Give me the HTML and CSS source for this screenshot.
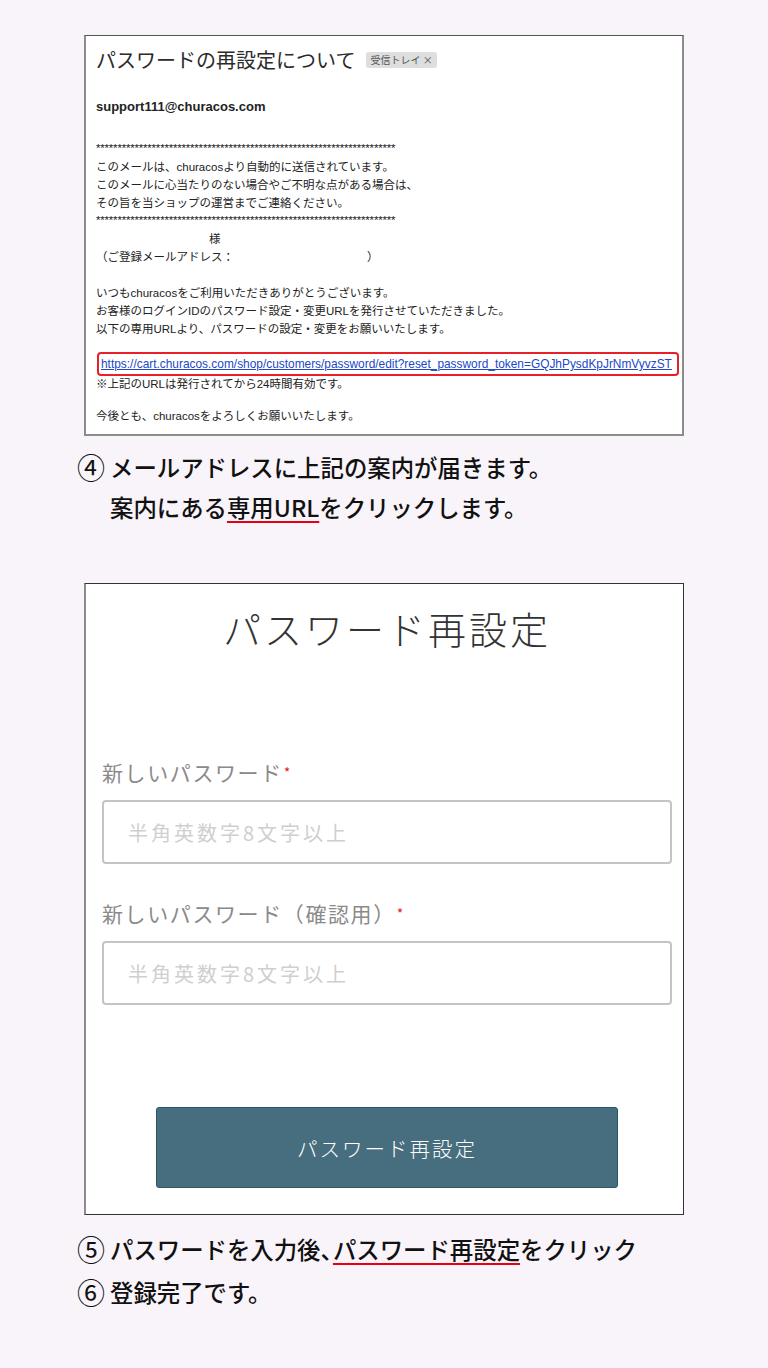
FILE: index.html
```html
<!DOCTYPE html>
<html lang="ja">
<head>
    <meta charset="UTF-8">
    <title>パスワード再設定の手順</title>
    <link rel="stylesheet" href="styles.css">
</head>
<body>
<div class="page">

<!-- メール画面 -->
<div class="mail">
    <div class="mail-title">パスワードの再設定について<span class="badge">受信トレイ ×</span></div>
    <div class="mail-from">support111@churacos.com</div>
    <div class="mail-body">
        <div class="stars">**********************************************************************</div>
        <div>このメールは、churacosより自動的に送信されています。</div>
        <div>このメールに心当たりのない場合やご不明な点がある場合は、</div>
        <div>その旨を当ショップの運営までご連絡ください。</div>
        <div class="stars">**********************************************************************</div>
        <div class="sama">様</div>
        <div>（ご登録メールアドレス：<span class="blank"></span>）</div>
        <div class="gap"></div>
        <div>いつもchuracosをご利用いただきありがとうございます。</div>
        <div>お客様のログインIDのパスワード設定・変更URLを発行させていただきました。</div>
        <div>以下の専用URLより、パスワードの設定・変更をお願いいたします。</div>
        <div class="link-box"><a href="#">https://cart.churacos.com/shop/customers/password/edit?reset_password_token=GQJhPysdKpJrNmVyvzST</a></div>
        <div class="note">※上記のURLは発行されてから24時間有効です。</div>
        <div class="last">今後とも、churacosをよろしくお願いいたします。</div>
    </div>
</div>

<div class="caption cap1">
    <div><span class="num">④</span>メールアドレスに上記の案内が届きます。</div>
    <div class="indent">案内にある<span class="mark">専用URL</span>をクリックします。</div>
</div>

<!-- 再設定フォーム -->
<div class="reset">
    <h2>パスワード再設定</h2>
    <form>
        <label class="lbl first">新しいパスワード<span class="req">*</span></label>
        <input type="password" placeholder="半角英数字8文字以上">
        <label class="lbl">新しいパスワード（確認用）<span class="req">*</span></label>
        <input type="password" placeholder="半角英数字8文字以上">
        <div class="btn-wrap">
            <button type="button">パスワード再設定</button>
        </div>
    </form>
</div>

<div class="caption cap2">
    <div><span class="num">⑤</span>パスワードを入力後<span class="comma">、</span><span class="mark">パスワード再設定</span>をクリック</div>
    <div><span class="num">⑥</span>登録完了です。</div>
</div>

</div>
</body>
</html>
```

FILE: styles.css
```css
body {
    margin: 0;
    background-color: #f9f4fa;
    font-family: "Liberation Sans", "Noto Sans CJK JP", sans-serif;
    color: #222;
}

.page {
    padding-top: 35px;
    padding-bottom: 40px;
}

/* メール画面 */
.mail {
    width: 600px;
    height: 401px;
    box-sizing: border-box;
    margin: 0 auto;
    background-color: #fff;
    border: 2px solid #8c8c8c;
    border-top: 1px solid #555;
    padding: 12px 0 0 10px;
}

.mail-title {
    font-family: "Noto Sans CJK JP", sans-serif;
    font-size: 20px;
    line-height: 24px;
    color: #2b2b2b;
    display: flex;
    align-items: center;
}

.badge {
    font-size: 10px;
    line-height: 16px;
    color: #555;
    background-color: #dedede;
    border-radius: 3px;
    padding: 0 4px;
    margin-left: 11px;
}

.mail-from {
    margin-top: 26px;
    font-size: 13px;
    font-weight: bold;
    line-height: 18px;
}

.mail-body {
    margin-top: 24px;
    font-size: 11.5px;
    line-height: 18px;
}

.stars {
    letter-spacing: -0.2px;
    line-height: 16px;
    height: 18px;
}

.sama {
    padding-left: 113px;
}

.blank {
    display: inline-block;
    width: 133px;
}

.gap {
    height: 18px;
}

.link-box {
    margin: 14px 3px 0 1px;
    border: 2px solid #e8202a;
    border-radius: 4px;
    height: 24px;
    box-sizing: border-box;
    padding-left: 2px;
    line-height: 20px;
    white-space: nowrap;
    overflow: hidden;
}

.link-box a {
    color: #2148c6;
    font-size: 11.9px;
}

.note {
    line-height: 16px;
}

.last {
    margin-top: 15px;
}

/* 説明文 */
.caption {
    padding-left: 77px;
    font-family: "Noto Sans CJK JP", sans-serif;
    font-weight: 500;
    font-size: 23.4px;
    color: #111;
}

.num {
    display: inline-block;
    width: 33px;
    font-size: 28px;
    font-weight: 400;
    vertical-align: top;
}

.comma {
    letter-spacing: -11px;
}

.cap1 {
    margin-top: 11px;
    line-height: 40px;
}

.cap2 {
    margin-top: 13px;
    line-height: 43px;
}

.indent {
    padding-left: 33px;
}

.mark {
    text-decoration: underline;
    text-decoration-color: #e60012;
    text-decoration-thickness: 2px;
    text-underline-offset: 4px;
}

/* 再設定フォーム */
.reset {
    width: 600px;
    height: 632px;
    box-sizing: border-box;
    margin: 56px auto 0;
    background-color: #fff;
    border: 1px solid #333;
    border-left: 2px solid #8c8c8c;
    padding: 19px 11px 0 16px;
    font-family: "Noto Sans CJK JP", sans-serif;
}

.reset h2 {
    margin: 0;
    text-align: center;
    font-size: 38px;
    font-weight: 300;
    letter-spacing: 3px;
    line-height: 50px;
    color: #333;
}

.lbl {
    display: block;
    font-size: 21px;
    line-height: 28px;
    color: #8a8a8a;
    margin-top: 35px;
    letter-spacing: 1.6px;
}

.lbl.first {
    margin-top: 105px;
}

.req {
    color: #e0202a;
    font-size: 14px;
    vertical-align: top;
    margin-left: 1px;
}

input {
    display: block;
    width: 100%;
    height: 64px;
    box-sizing: border-box;
    margin-top: 14px;
    border: 2px solid #c4c4c4;
    border-radius: 4px;
    padding: 0 24px;
    font-family: "Noto Sans CJK JP", sans-serif;
    font-size: 20px;
    letter-spacing: 3px;
}

input::placeholder {
    color: #cfcfcf;
}

.btn-wrap {
    display: flex;
    justify-content: center;
    margin-top: 102px;
}

button {
    width: 462px;
    height: 81px;
    background-color: #476e7e;
    border: 1px solid #2a5868;
    border-radius: 3px;
    color: #fff;
    font-family: "Noto Sans CJK JP", sans-serif;
    font-size: 20.5px;
    font-weight: 300;
    letter-spacing: 2px;
}
```
